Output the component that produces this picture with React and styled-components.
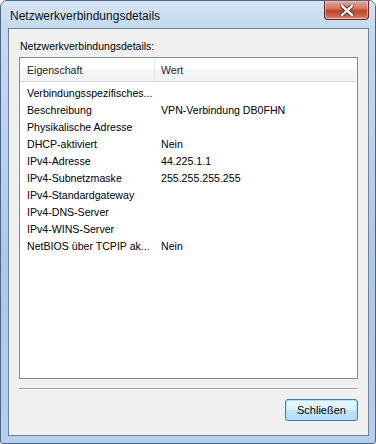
import React from 'react';
import styled, { createGlobalStyle } from 'styled-components';

const GlobalStyle = createGlobalStyle`
  html, body {
    margin: 0;
    padding: 0;
    background: #ffffff;
  }
  body {
    font-family: "Liberation Sans", Arial, sans-serif;
  }
`;

const rows = [
  ['Verbindungsspezifisches...', ''],
  ['Beschreibung', 'VPN-Verbindung DB0FHN'],
  ['Physikalische Adresse', ''],
  ['DHCP-aktiviert', 'Nein'],
  ['IPv4-Adresse', '44.225.1.1'],
  ['IPv4-Subnetzmaske', '255.255.255.255'],
  ['IPv4-Standardgateway', ''],
  ['IPv4-DNS-Server', ''],
  ['IPv4-WINS-Server', ''],
  ['NetBIOS über TCPIP ak...', 'Nein'],
];

const App = () => {
  return (
    <>
      <GlobalStyle />
      <Window>
        <TitleBar>
          <Title>Netzwerkverbindungsdetails</Title>
          <CloseButton aria-label="Schließen">
            <svg width="14" height="11" viewBox="0 0 14 11">
              <path
                d="M2 1 L12 10 M12 1 L2 10"
                stroke="#3b2a2a"
                strokeWidth="4.2"
                strokeLinecap="square"
              />
              <path
                d="M2 1 L12 10 M12 1 L2 10"
                stroke="#ffffff"
                strokeWidth="2.4"
                strokeLinecap="square"
              />
            </svg>
          </CloseButton>
        </TitleBar>
        <Client>
          <Label>Netzwerkverbindungsdetails:</Label>
          <ListBox>
            <Header>
              <HeaderCell $width={135}>Eigenschaft</HeaderCell>
              <HeaderCell>Wert</HeaderCell>
            </Header>
            <Rows>
              {rows.map(([name, value]) => (
                <Row key={name}>
                  <Cell $width={134}>{name}</Cell>
                  <Cell>{value}</Cell>
                </Row>
              ))}
            </Rows>
          </ListBox>
          <Separator />
          <ButtonRow>
            <Button>Schließen</Button>
          </ButtonRow>
        </Client>
      </Window>
    </>
  );
};

const Window = styled.div`
  width: 376px;
  height: 444px;
  box-sizing: border-box;
  display: flex;
  flex-direction: column;
  border-radius: 7px 7px 3px 3px;
  border: 1px solid #4b6584;
  background: linear-gradient(180deg, #c7dbf1 0%, #bcd3ee 30%, #aac8e8 60%, #b5cfec 100%);
  overflow: hidden;
`;

const TitleBar = styled.div`
  height: 28px;
  display: flex;
  justify-content: space-between;
  align-items: flex-start;
  background: linear-gradient(180deg, #d6e5f5 0%, #c4d9f0 100%);
`;

const Title = styled.div`
  margin: 8px 0 0 9px;
  font-size: 12px;
  line-height: 14px;
  color: #111111;
`;

const CloseButton = styled.div`
  width: 43px;
  height: 18px;
  margin-right: 6px;
  display: flex;
  align-items: center;
  justify-content: center;
  border: 1px solid #6b2a20;
  border-top: none;
  border-radius: 0 0 4px 4px;
  background: linear-gradient(180deg, #e8a493 0%, #d27a66 40%, #c0432c 55%, #d0664c 85%, #e49a7e 100%);
  box-shadow: inset 0 0 0 1px rgba(255, 220, 210, 0.5);
`;

const Client = styled.div`
  flex: 1;
  margin: 0 6px 7px 7px;
  display: flex;
  flex-direction: column;
  padding: 10px 10px 14px 10px;
  background: #f0f0f0;
  border: 1px solid #6f839d;
`;

const Label = styled.div`
  padding-left: 1px;
  font-size: 10.5px;
  line-height: 14px;
  color: #000000;
`;

const ListBox = styled.div`
  margin-top: 4px;
  height: 322px;
  box-sizing: border-box;
  border: 1px solid #828790;
  background: #ffffff;
  display: flex;
  flex-direction: column;
`;

const Header = styled.div`
  height: 23px;
  display: flex;
  border-bottom: 1px solid #d5d5d5;
  background: linear-gradient(180deg, #ffffff 0%, #ffffff 45%, #f4f5f7 55%, #f2f3f5 100%);
`;

const HeaderCell = styled.div`
  box-sizing: border-box;
  width: ${p => (p.$width ? `${p.$width}px` : 'auto')};
  flex: ${p => (p.$width ? 'none' : '1')};
  padding-left: ${p => (p.$width ? '7px' : '6px')};
  display: flex;
  align-items: center;
  font-size: 10.6px;
  color: #1e1e1e;
  border-right: ${p => (p.$width ? '1px solid #e3e5e8' : 'none')};
`;

const Rows = styled.div`
  padding-top: 2px;
  display: flex;
  flex-direction: column;
`;

const Row = styled.div`
  height: 17px;
  display: flex;
  align-items: center;
`;

const Cell = styled.div`
  box-sizing: border-box;
  width: ${p => (p.$width ? `${p.$width}px` : 'auto')};
  flex: ${p => (p.$width ? 'none' : '1')};
  padding-left: 7px;
  font-size: 10.6px;
  color: #000000;
  white-space: nowrap;
`;

const Separator = styled.div`
  margin-top: 9px;
  height: 1px;
  background: #a0a0a0;
  border-bottom: 1px solid #ffffff;
`;

const ButtonRow = styled.div`
  margin-top: 9px;
  display: flex;
  justify-content: flex-end;
`;

const Button = styled.div`
  width: 71px;
  height: 20px;
  display: flex;
  align-items: center;
  justify-content: center;
  font-size: 11px;
  color: #000000;
  border: 1px solid #3c7fb1;
  border-radius: 3px;
  background: linear-gradient(180deg, #ecf7fd 0%, #def1fc 48%, #c4e5f8 52%, #b2dcf7 100%);
  box-shadow: inset 0 0 0 1px #a9e4fe;
`;

export default App;
